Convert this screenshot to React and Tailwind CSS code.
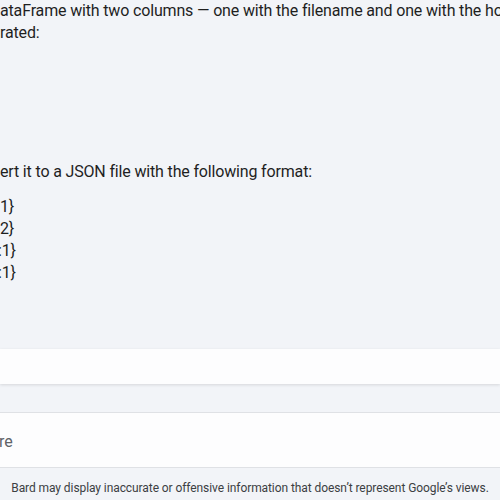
export default function App() {
  return (
    <div className="w-[500px] h-[500px] overflow-hidden bg-[#f2f4f8] flex flex-col text-[#1f1f1f]" style={{ fontFamily: 'Roboto, "Liberation Sans", sans-serif' }}>
      <div className="h-[349px] overflow-hidden text-[16px] leading-[22px] tracking-[-0.16px]">
        <div className="whitespace-nowrap">
          <p>ataFrame with two columns — one with the filename and one with the hour</p>
          <p>rated:</p>
        </div>
        <p className="mt-[117px] whitespace-nowrap">ert it to a JSON file with the following format:</p>
        <div className="mt-[13px] whitespace-nowrap">
          <p>1}</p>
          <p>2}</p>
          <p className="-ml-[2px]">:1}</p>
          <p className="-ml-[2px]">:1}</p>
        </div>
      </div>
      <div className="h-[35px] bg-[#fdfdfe] shadow-[0_1px_3px_rgba(0,0,0,0.12)] relative z-10" />
      <div className="h-[28px] bg-[#f2f4f8]" />
      <div className="h-[56px] bg-[#fdfdfe] border-y border-[#dfe1e5] flex items-center pt-[3px]">
        <span className="text-[16px] text-[#5f6368] -ml-[1px]">re</span>
      </div>
      <div className="flex-1 flex justify-center pt-[12px]">
        <p className="text-[12px] leading-[16px] text-[#3c4043] whitespace-nowrap tracking-[-0.08px]">Bard may display inaccurate or offensive information that doesn’t represent Google’s views.</p>
      </div>
    </div>
  );
}
